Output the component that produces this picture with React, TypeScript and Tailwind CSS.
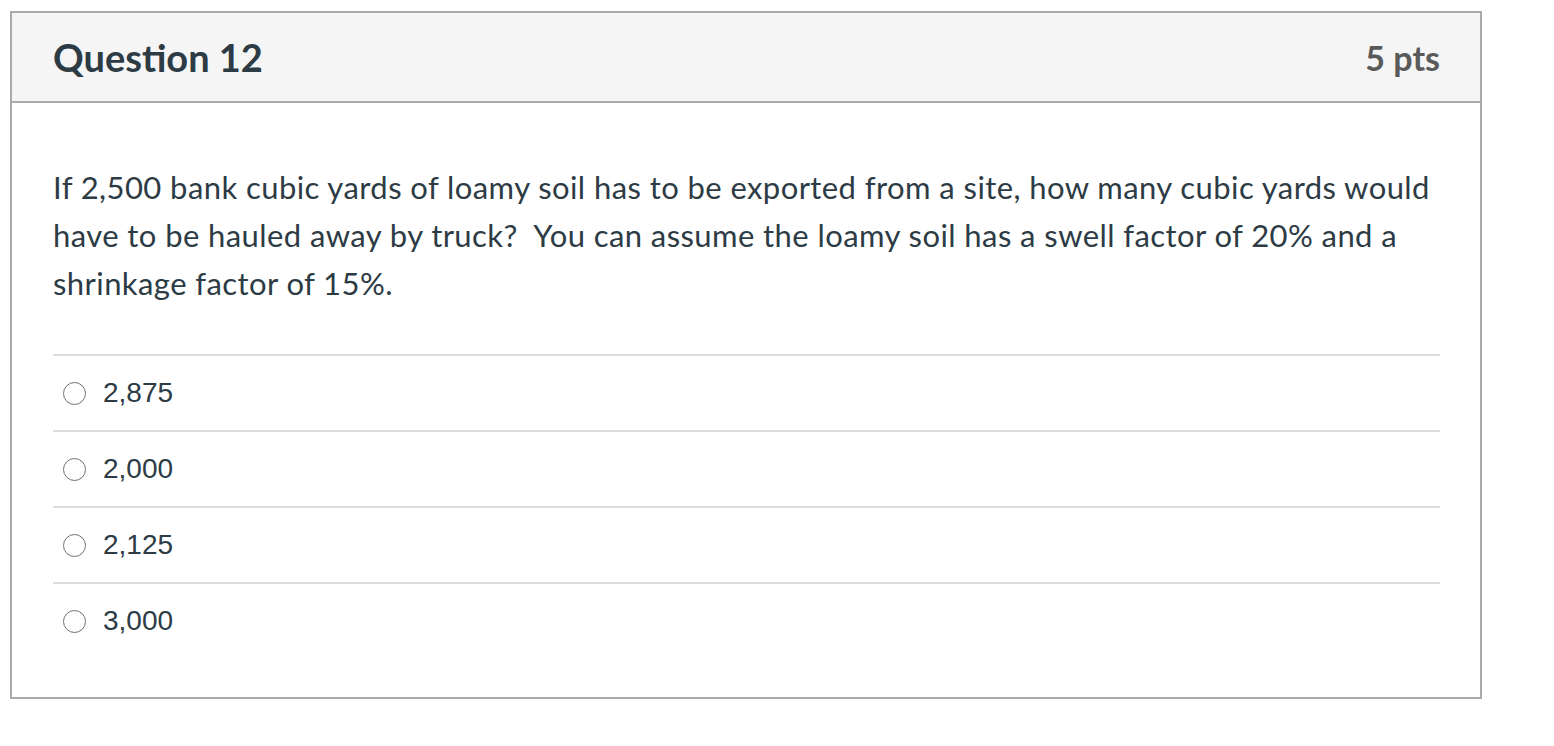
import React from "react";

const answers = ["2,875", "2,000", "2,125", "3,000"];

export default function App() {
  return (
    <div className="bg-white w-[1554px] h-[746px] pt-[11px] pl-[10px]">
      <div className="w-[1472px] h-[688px] border-2 border-[#aaaaaa] flex flex-col">
        <div className="h-[90px] bg-[#f5f5f5] border-b-2 border-[#aaaaaa] flex items-center justify-between pl-[41px] pr-[40px] font-['Lato',sans-serif] font-bold">
          <span className="text-[38px] text-[#2d3b45]">Question 12</span>
          <span className="text-[34px] text-[#5a5a5a]">5 pts</span>
        </div>
        <div className="pl-[41px] pr-[40px] pt-[60px]">
          <p className="font-['Lato',sans-serif] text-[31px] leading-[48px] tracking-[0.42px] text-[#2d3b45]">
            If 2,500 bank cubic yards of loamy soil has to be exported from a site, how many cubic yards would have to be hauled away by truck?&nbsp; You can assume the loamy soil has a swell factor of 20% and a shrinkage factor of 15%.
          </p>
          <div className="mt-[47px]">
            {answers.map((a) => (
              <div key={a} className="border-t-2 border-[#dddddd] h-[76px] flex items-center">
                <span className="ml-[10px] w-[23px] h-[23px] rounded-full border-[1.5px] border-[#6f6f6f] bg-white" />
                <span className="ml-[17px] font-['Liberation_Sans',Arial,sans-serif] text-[28px] text-[#2d3b45]">{a}</span>
              </div>
            ))}
          </div>
        </div>
      </div>
    </div>
  );
}
